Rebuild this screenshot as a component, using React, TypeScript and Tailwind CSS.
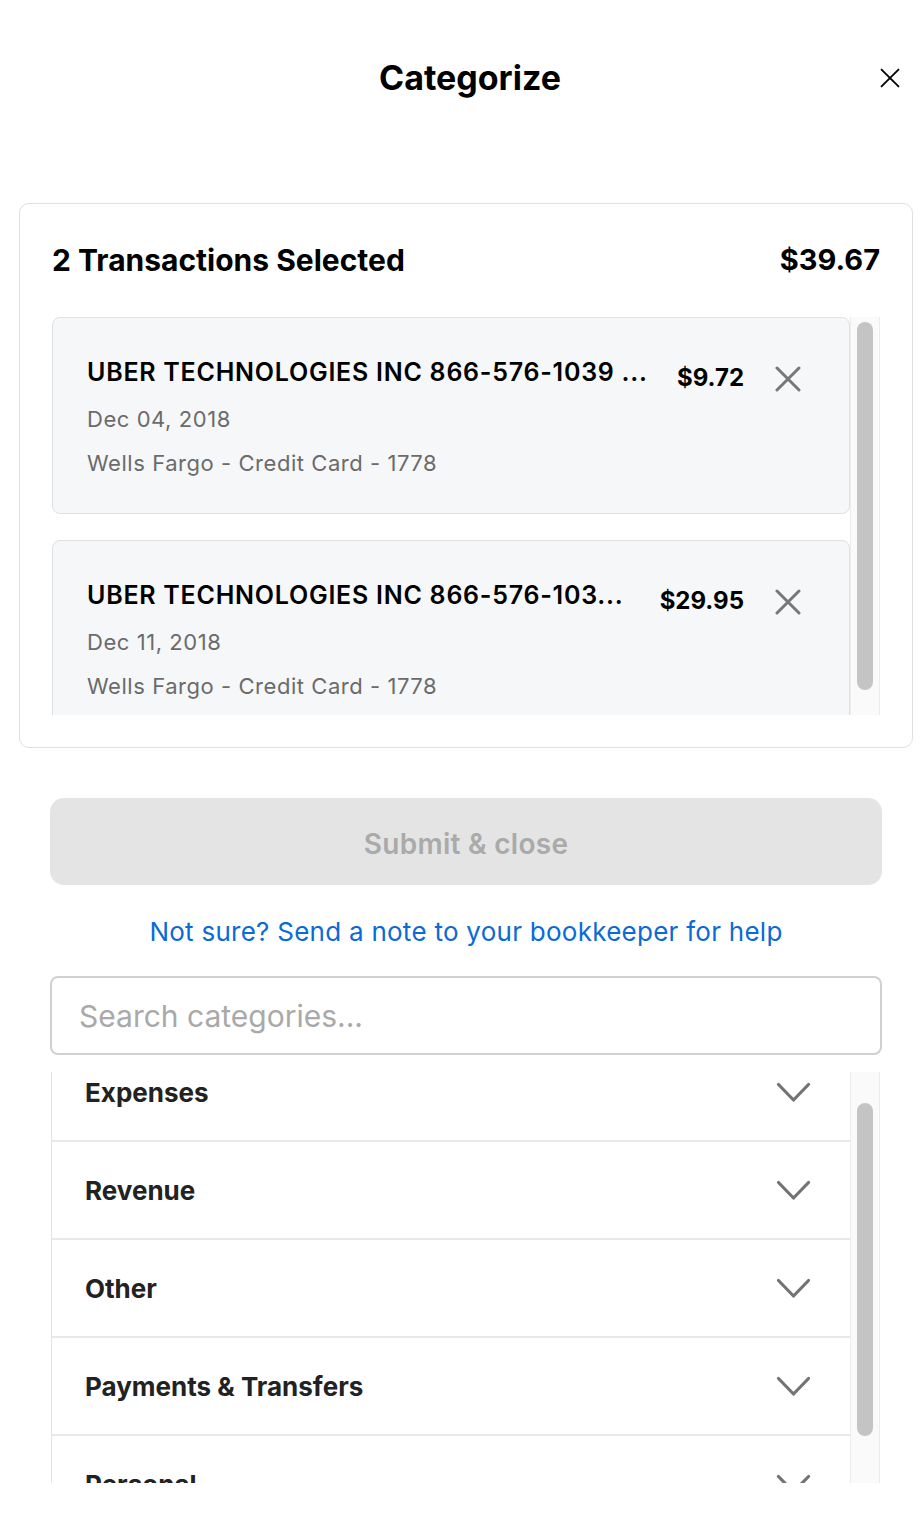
import React from "react";

const txns = [
  {
    name: "UBER TECHNOLOGIES INC 866-576-1039 ...",
    amount: "$9.72",
    date: "Dec 04, 2018",
    account: "Wells Fargo - Credit Card - 1778",
  },
  {
    name: "UBER TECHNOLOGIES INC 866-576-103...",
    amount: "$29.95",
    date: "Dec 11, 2018",
    account: "Wells Fargo - Credit Card - 1778",
  },
];

const categories = ["Expenses", "Revenue", "Other", "Payments & Transfers", "Personal"];

const CloseIcon = ({ size, stroke, color, className }: { size: number; stroke: number; color: string; className?: string }) => (
  <svg width={size} height={size} viewBox="0 0 26 26" className={className} fill="none">
    <path d="M2 2 L24 24 M24 2 L2 24" stroke={color} strokeWidth={stroke} strokeLinecap="round" />
  </svg>
);

const Chevron = () => (
  <svg width="35" height="21" viewBox="0 0 35 21" fill="none">
    <path d="M2.5 2.5 L17.5 18 L32.5 2.5" stroke="#737373" strokeWidth="3.2" strokeLinecap="round" strokeLinejoin="round" />
  </svg>
);

const Track = ({ top, height }: { top: number; height: number }) => (
  <div className="w-[30px] shrink-0 border-l border-r border-[#ececec] bg-[#fafafa] flex justify-center">
    <div className="w-[16px] rounded-full bg-[#c4c4c4]" style={{ marginTop: top, height }} />
  </div>
);

export default function App() {
  return (
    <div className="w-[922px] h-[1514px] bg-white font-['Inter',sans-serif] text-black overflow-hidden">
      {/* header */}
      <div className="relative flex justify-center pl-[18px] pt-[58px]">
        <h1 className="text-[34px] leading-[40px] font-bold">Categorize</h1>
        <button className="absolute right-[22px] top-[68px]">
          <CloseIcon size={20} stroke={2.4} color="#000" />
        </button>
      </div>

      {/* selected transactions */}
      <div className="ml-[19px] mt-[105px] w-[894px] rounded-[10px] border border-[#e0e0e0] px-[32px] pt-[38px] pb-[32px]">
        <div className="flex items-center justify-between">
          <span className="text-[30px] leading-[36px] font-bold">2 Transactions Selected</span>
          <span className="text-[29px] leading-[36px] font-bold">$39.67</span>
        </div>

        <div className="mt-[39px] flex h-[398px]">
          <div className="flex w-[798px] flex-col gap-[26px] overflow-hidden">
            {txns.map((t) => (
              <div
                key={t.amount}
                className="shrink-0 rounded-[8px] border border-[#e0e0e0] bg-[#f6f7f9] pl-[34px] pr-[48px] pt-[38px] pb-[36px]"
              >
                <div className="flex items-start">
                  <div className="min-w-0 flex-1 truncate text-[25px] leading-[32px] font-semibold tracking-[0.03em]">
                    {t.name}
                  </div>
                  <div className="ml-6 mt-[6px] text-[24px] leading-[32px] font-bold">{t.amount}</div>
                  <CloseIcon size={26} stroke={3} color="#777" className="ml-[31px] mt-[10px]" />
                </div>
                <div className="mt-[11px] text-[22px] leading-[28px] tracking-[0.025em] text-[#6b6b6b]">{t.date}</div>
                <div className="mt-[16px] text-[22px] leading-[28px] tracking-[0.025em] text-[#6b6b6b]">{t.account}</div>
              </div>
            ))}
          </div>
          <Track top={5} height={368} />
        </div>
      </div>

      {/* actions */}
      <div className="ml-[50px] w-[832px]">
        <button className="mt-[50px] flex h-[87px] w-full items-center justify-center rounded-[14px] bg-[#e4e4e4] pt-1 text-[28px] font-semibold tracking-[0.01em] text-[#aaaaaa]">
          Submit &amp; close
        </button>

        <p className="mt-[29px] text-center text-[26px] leading-[36px] tracking-[0.01em] text-[#0a6ad6]">
          Not sure? Send a note to your bookkeeper for help
        </p>

        <input
          className="mt-[26px] h-[79px] w-full rounded-[8px] border-2 border-[#d0d0d0] px-[27px] text-[30px] outline-none placeholder:text-[#a9a9a9]"
          placeholder="Search categories..."
        />

        {/* category list */}
        <div className="mt-[17px] ml-[1px] flex h-[411px] w-[829px] overflow-hidden">
          <div className="w-[799px] overflow-hidden border-l border-[#e4e4e4]">
            <div className="mt-[-28px]">
              {categories.map((c) => (
                <div
                  key={c}
                  className="flex h-[98px] items-center justify-between border-b-2 border-[#e8e8e8] pl-[33px] pr-[39px]"
                >
                  <span className="text-[26px] font-bold text-[#222]">{c}</span>
                  <Chevron />
                </div>
              ))}
            </div>
          </div>
          <Track top={31} height={333} />
        </div>
      </div>
    </div>
  );
}
